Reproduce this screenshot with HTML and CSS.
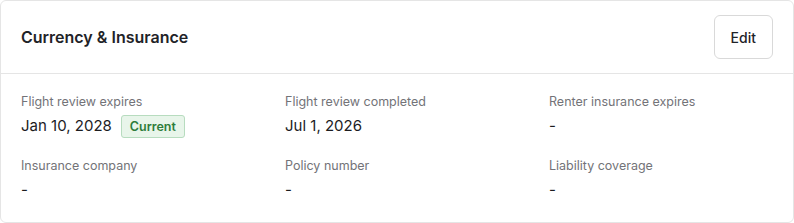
FILE: index.html
```html
<!DOCTYPE html>
<html lang="en">
<head>
  <meta charset="UTF-8">
  <meta name="viewport" content="width=device-width, initial-scale=1.0">
  <title>Currency &amp; Insurance</title>
  <link rel="stylesheet" href="styles.css">
</head>
<body>
  <div class="card">
    <div class="card-header">
      <h2>Currency &amp; Insurance</h2>
      <button type="button" class="edit-btn">Edit</button>
    </div>
    <div class="card-body">
      <div class="field">
        <div class="label">Flight review expires</div>
        <div class="value">Jan 10, 2028 <span class="badge">Current</span></div>
      </div>
      <div class="field">
        <div class="label">Flight review completed</div>
        <div class="value">Jul 1, 2026</div>
      </div>
      <div class="field">
        <div class="label">Renter insurance expires</div>
        <div class="value">-</div>
      </div>
      <div class="field">
        <div class="label">Insurance company</div>
        <div class="value">-</div>
      </div>
      <div class="field">
        <div class="label">Policy number</div>
        <div class="value">-</div>
      </div>
      <div class="field">
        <div class="label">Liability coverage</div>
        <div class="value">-</div>
      </div>
    </div>
  </div>
</body>
</html>
```

FILE: styles.css
```css
body {
  font-family: Inter, "Noto Sans", sans-serif;
  margin: 0;
  padding: 0;
  background: #fff;
  color: #1c1c1f;
}

.card {
  width: 794px;
  height: 223px;
  box-sizing: border-box;
  border: 1px solid #e5e5e5;
  border-radius: 6px;
  background: #fff;
}

.card-header {
  display: flex;
  align-items: center;
  justify-content: space-between;
  padding: 14px 20px;
  border-bottom: 1px solid #e5e5e5;
}

.card-header h2 {
  margin: 0;
  font-size: 16px;
  font-weight: 600;
  color: #1f2328;
}

.edit-btn {
  height: 44px;
  padding: 0 16px;
  background: #fff;
  border: 1px solid #d9d9d9;
  border-radius: 6px;
  font-family: inherit;
  font-size: 14px;
  font-weight: 500;
  color: #1f2328;
  cursor: pointer;
}

.card-body {
  display: grid;
  grid-template-columns: repeat(3, 1fr);
  column-gap: 40px;
  row-gap: 18px;
  padding: 18px 20px 20px;
}

.label {
  font-size: 12.5px;
  line-height: 20px;
  color: #737378;
}

.value {
  display: flex;
  align-items: center;
  gap: 9px;
  font-size: 15px;
  line-height: 24px;
  margin-top: 2px;
  color: #1c1c1f;
}

.badge {
  display: inline-block;
  font-size: 12.5px;
  font-weight: 600;
  line-height: 21px;
  padding: 0 8px;
  color: #2e7d3a;
  background: #e8f5ea;
  border: 1px solid #b7dcbf;
  border-radius: 3px;
}
```
